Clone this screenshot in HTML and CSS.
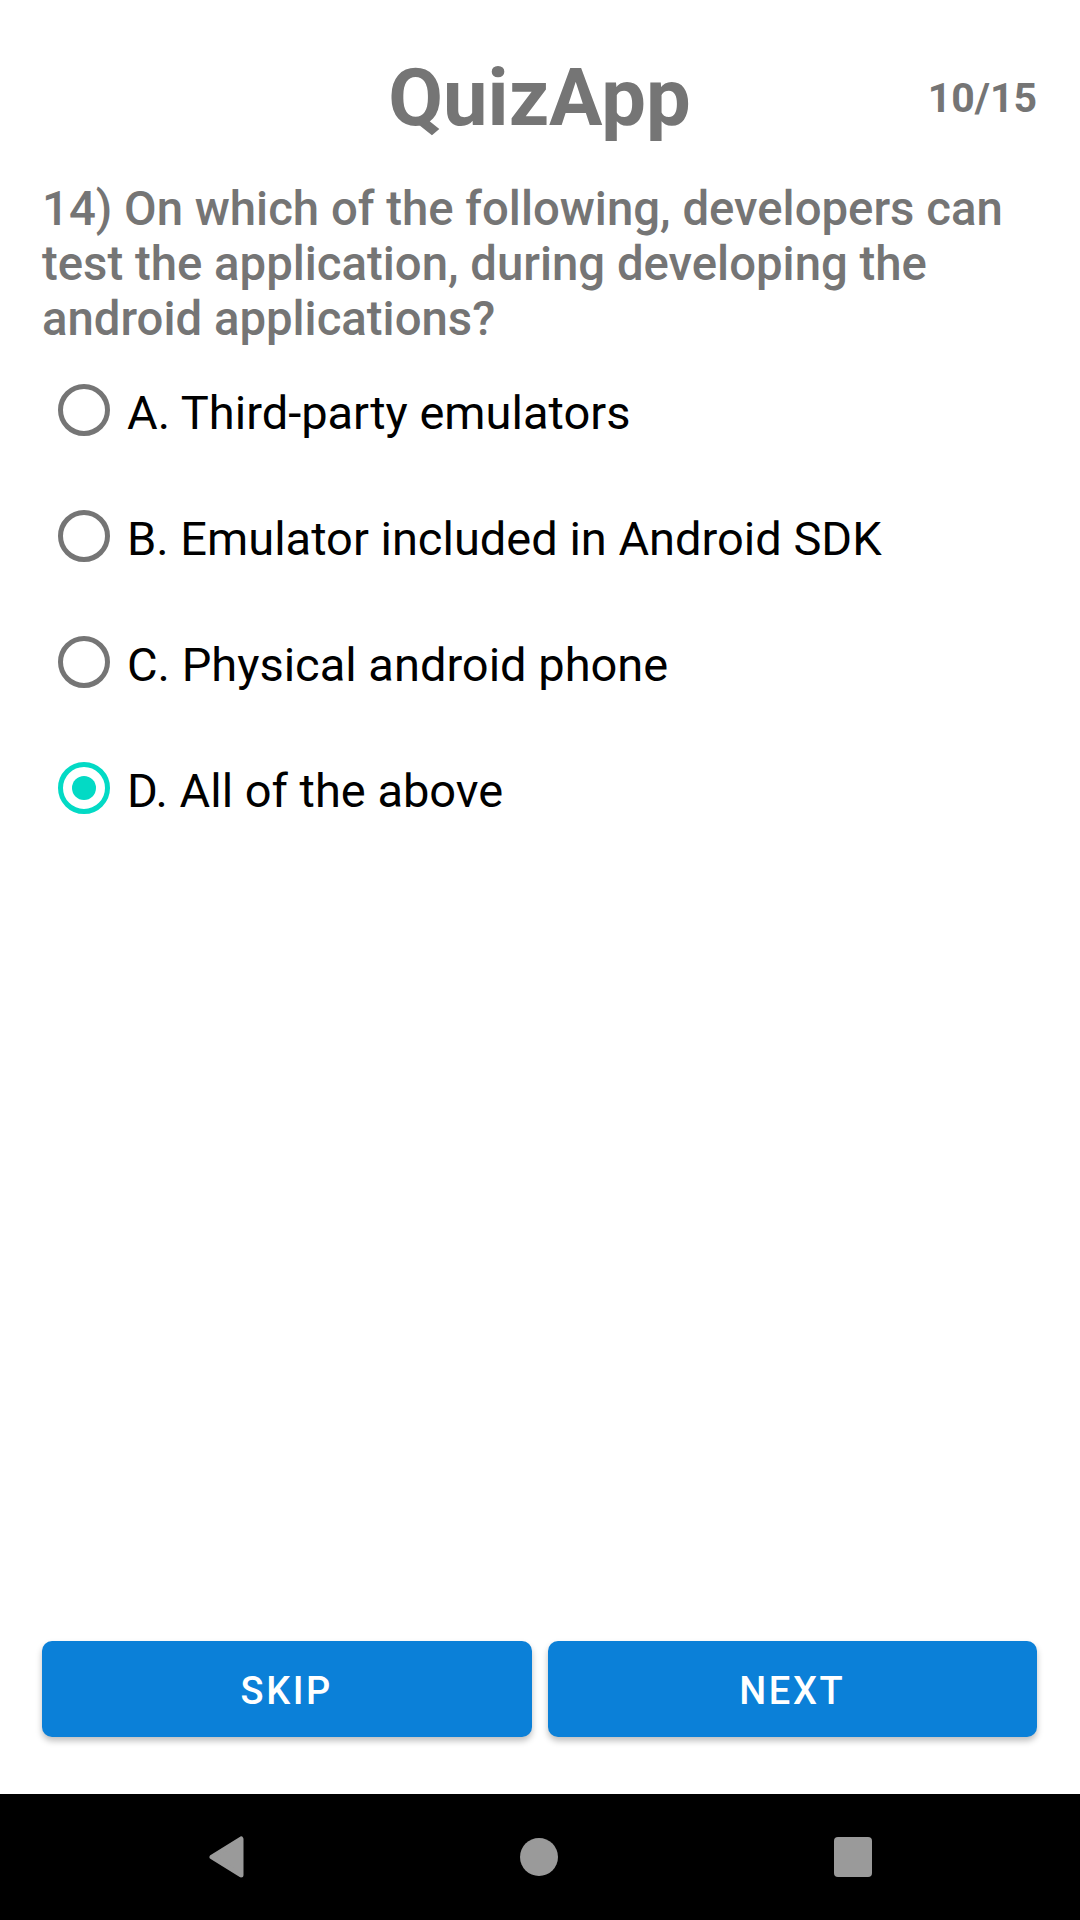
FILE: index.html
```html
<!DOCTYPE html>
<html lang="en">
<head>
<meta charset="utf-8">
<title>QuizApp</title>
<link rel="stylesheet" href="styles.css">
</head>
<body>
<div class="screen">
  <main class="app">
    <header class="header">
      <span class="spacer-cell"></span>
      <h1 class="title">QuizApp</h1>
      <span class="counter">10/15</span>
    </header>
    <p class="question">14) On which of the following, developers can test the application, during developing the android applications?</p>
    <div class="options">
      <div class="option"><span class="radio"></span><span class="label">A. Third-party emulators</span></div>
      <div class="option"><span class="radio"></span><span class="label">B. Emulator included in Android SDK</span></div>
      <div class="option"><span class="radio"></span><span class="label">C. Physical android phone</span></div>
      <div class="option"><span class="radio checked"><span class="dot"></span></span><span class="label">D. All of the above</span></div>
    </div>
    <div class="fill"></div>
    <div class="actions">
      <button class="btn">SKIP</button>
      <button class="btn">NEXT</button>
    </div>
  </main>
  <nav class="navbar">
    <svg class="nav-back" width="36" height="42" viewBox="0 0 36 42"><path d="M4 21 L33 3 L33 39 Z" fill="#9a9a9a" stroke="#9a9a9a" stroke-width="5" stroke-linejoin="round"/></svg>
    <span class="nav-home"></span>
    <span class="nav-recent"></span>
  </nav>
</div>
</body>
</html>
```

FILE: styles.css
```css
html, body {
  margin: 0;
  padding: 0;
  background: #ffffff;
}

.screen {
  width: 1080px;
  height: 1920px;
  display: flex;
  flex-direction: column;
  font-family: Roboto, "Noto Sans", "Liberation Sans", sans-serif;
}

.app {
  flex: 1;
  display: flex;
  flex-direction: column;
}

.header {
  display: grid;
  grid-template-columns: 1fr auto 1fr;
  align-items: start;
  padding: 51px 43px 0 42px;
}

.title {
  margin: 0;
  font-size: 79.5px;
  font-weight: 700;
  color: #757575;
  line-height: normal;
}

.counter {
  justify-self: end;
  margin-top: 23px;
  font-size: 41px;
  font-weight: 700;
  color: #757575;
  line-height: normal;
}

.question {
  margin: 38px 0 0 0;
  padding: 0 42px;
  font-size: 47.3px;
  line-height: 55px;
  font-weight: 500;
  color: #757575;
}

.options {
  display: flex;
  flex-direction: column;
  padding: 0 0 0 58px;
}

.option {
  height: 126px;
  display: flex;
  align-items: center;
  gap: 17px;
}

.radio {
  width: 52px;
  height: 52px;
  box-sizing: border-box;
  border: 5px solid #757575;
  border-radius: 50%;
  display: flex;
  align-items: center;
  justify-content: center;
  flex: none;
}

.radio.checked {
  border-color: #03dac5;
}

.dot {
  width: 24px;
  height: 24px;
  border-radius: 50%;
  background: #03dac5;
}

.label {
  font-size: 47px;
  color: #000000;
  line-height: normal;
  position: relative;
  top: 2px;
}

.fill {
  flex: 1;
}

.actions {
  display: flex;
  gap: 16px;
  padding: 0 43px 57px 42px;
}

.btn {
  flex: 1;
  height: 96px;
  border: none;
  border-radius: 10px;
  background: #0b80d8;
  color: #ffffff;
  font-family: Roboto, "Noto Sans", "Liberation Sans", sans-serif;
  font-size: 38px;
  font-weight: 500;
  letter-spacing: 2.6px;
  box-shadow: 0 4px 6px rgba(0, 0, 0, 0.25);
  padding: 3px 0 0 0;
}

.navbar {
  height: 126px;
  background: #000000;
  display: flex;
  align-items: center;
  justify-content: center;
  gap: 276px;
}

.nav-back {
  display: block;
}

.nav-home {
  width: 38px;
  height: 38px;
  border-radius: 50%;
  background: #9a9a9a;
}

.nav-recent {
  width: 38px;
  height: 40px;
  border-radius: 4px;
  background: #9a9a9a;
}
```
